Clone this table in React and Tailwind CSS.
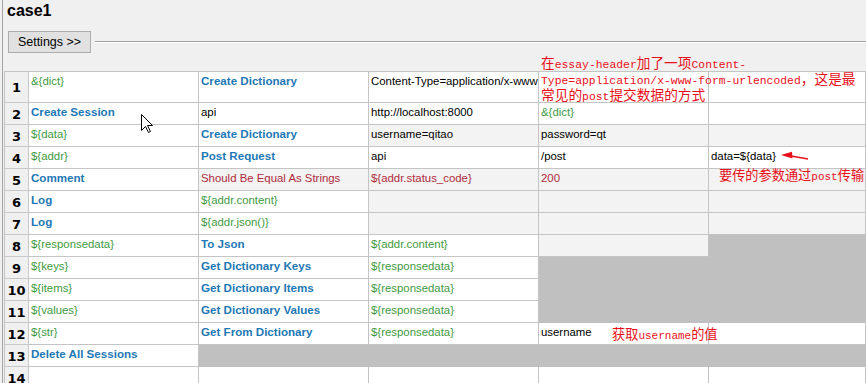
import React from "react";

const tone = {
  k: "font-bold text-[11.6px] text-[#1e78b4]",
  v: "text-[11.4px] text-[#3f9a3f]",
  t: "text-[11.4px] text-black",
  c: "text-[11.4px] text-[#b02a3c]",
};

const fill = {
  w: "bg-white border-[#c4c4c4]",
  l: "bg-[#f3f3f3] border-[#c4c4c4]",
  d: "bg-[#c0c0c0] border-[#c0c0c0]",
};

// [text, kind, background]
const rows = [
  [["&{dict}", "v", "w"], ["Create Dictionary", "k", "w"], ["Content-Type=application/x-www-form-urlencoded", "t", "w"], ["", "t", "w"], ["", "t", "w"]],
  [["Create Session", "k", "w"], ["api", "t", "w"], ["http://localhost:8000", "t", "w"], ["&{dict}", "v", "w"], ["", "t", "w"]],
  [["${data}", "v", "w"], ["Create Dictionary", "k", "w"], ["username=qitao", "t", "l"], ["password=qt", "t", "l"], ["", "t", "l"]],
  [["${addr}", "v", "w"], ["Post Request", "k", "w"], ["api", "t", "w"], ["/post", "t", "w"], ["data=${data}", "t", "w"]],
  [["Comment", "k", "w"], ["Should Be Equal As Strings", "c", "l"], ["${addr.status_code}", "c", "l"], ["200", "c", "l"], ["", "t", "l"]],
  [["Log", "k", "w"], ["${addr.content}", "v", "w"], ["", "t", "l"], ["", "t", "l"], ["", "t", "l"]],
  [["Log", "k", "w"], ["${addr.json()}", "v", "w"], ["", "t", "l"], ["", "t", "l"], ["", "t", "l"]],
  [["${responsedata}", "v", "w"], ["To Json", "k", "w"], ["${addr.content}", "v", "w"], ["", "t", "l"], ["", "t", "d"]],
  [["${keys}", "v", "w"], ["Get Dictionary Keys", "k", "w"], ["${responsedata}", "v", "w"], ["", "t", "d"], ["", "t", "d"]],
  [["${items}", "v", "w"], ["Get Dictionary Items", "k", "w"], ["${responsedata}", "v", "w"], ["", "t", "d"], ["", "t", "d"]],
  [["${values}", "v", "w"], ["Get Dictionary Values", "k", "w"], ["${responsedata}", "v", "w"], ["", "t", "d"], ["", "t", "d"]],
  [["${str}", "v", "w"], ["Get From Dictionary", "k", "w"], ["${responsedata}", "v", "w"], ["username", "t", "w"], ["", "t", "w"]],
  [["Delete All Sessions", "k", "w"], ["", "t", "d"], ["", "t", "d"], ["", "t", "d"], ["", "t", "d"]],
  [["", "t", "w"], ["", "t", "w"], ["", "t", "w"], ["", "t", "w"], ["", "t", "w"]],
];

// red notes pasted over the grid: CJK in a sans CJK face, latin in a mono face
function Note({ lines, big }) {
  return (
    <div className="leading-[13px] text-[#e8101a]">
      {lines.map((line, i) => (
        <div key={i} className="whitespace-nowrap">
          {line.split(/([\u3000-\u9fff\uff00-\uffef]+)/).map((part, j) =>
            /[\u3000-\u9fff\uff00-\uffef]/.test(part) ? (
              <span
                key={j}
                className={`[font-family:'Noto_Sans_CJK_SC',sans-serif] ${big ? "text-[13.7px]" : "text-[13.2px]"}`}
              >
                {part}
              </span>
            ) : (
              <span
                key={j}
                className={`[font-family:'Liberation_Mono',monospace] ${big ? "text-[11.4px]" : "text-[11px]"}`}
              >
                {part}
              </span>
            )
          )}
        </div>
      ))}
    </div>
  );
}

export default function App() {
  return (
    <div className="relative flex h-[383px] w-full overflow-hidden bg-[#f0f0f0] [font-family:'Liberation_Sans',Arial,sans-serif]">
      <div className="w-[2px] shrink-0" />
      <div className="w-[1px] shrink-0 bg-[#a4a4a4]" />
      <div className="flex min-w-0 flex-1 flex-col">
        {/* title */}
        <div className="h-[31px] shrink-0 pl-[4px] pt-[1px] text-[16px] font-bold leading-[20px] text-black">case1</div>

        {/* settings bar */}
        <div className="flex h-[22px] shrink-0 items-center">
          <button className="ml-[5px] h-[22px] w-[83px] shrink-0 border border-[#adadad] bg-[#e1e1e1] text-[12.5px] text-black">
            Settings &gt;&gt;
          </button>
          <div className="ml-[4px] h-[2px] flex-1 border-t border-b border-t-[#a0a0a0] border-b-white" />
        </div>

        {/* grid */}
        <div className="ml-[1px] mt-[18px] grid shrink-0 grid-cols-[24px_170px_170px_170px_170px_1fr] grid-rows-[31px] auto-rows-[22px] border-t border-l border-[#c4c4c4]">
          {rows.map((row, r) => (
            <React.Fragment key={r}>
              <div className="flex items-center justify-center border-r border-b border-[#c8c8c8] bg-[#f0f0f0] pt-[2px] text-[13px] font-bold text-black [font-family:'DejaVu_Sans',sans-serif]">
                {r + 1}
              </div>
              {row.map(([text, kind, bg], c) => (
                <div
                  key={c}
                  className={`overflow-hidden whitespace-nowrap border-r border-b pl-[2px] pt-[2px] leading-[14px] ${fill[bg]} ${tone[kind]}`}
                >
                  {text}
                </div>
              ))}
            </React.Fragment>
          ))}
        </div>
      </div>

      {/* annotations */}
      <div className="absolute left-[541px] top-[56px]">
        <Note
          big
          lines={[
            "在essay-header加了一项Content-",
            "Type=application/x-www-form-urlencoded，这是最",
            "常见的post提交数据的方式",
          ]}
        />
      </div>
      <div className="absolute left-[719px] top-[168px]">
        <Note lines={["要传的参数通过post传输"]} />
      </div>
      <div className="absolute left-[612px] top-[327px]">
        <Note lines={["获取username的值"]} />
      </div>

      {/* red arrow */}
      <svg className="absolute left-[778px] top-[148px]" width="34" height="14" viewBox="0 0 34 14">
        <path d="M13 8 L30 11" stroke="#e8101a" strokeWidth="1.5" fill="none" />
        <path d="M3 7 L14 3.8 L14.5 10.5 Z" fill="#e8101a" />
      </svg>

      {/* mouse pointer */}
      <svg className="absolute left-[141px] top-[114px]" width="13" height="20" viewBox="0 0 13 20">
        <path
          d="M0.5 0.5 L0.5 16.5 L4.5 12.5 L7.5 18.5 L9.5 17.5 L6.5 11.5 L11.5 11.5 Z"
          fill="#ffffff"
          stroke="#000000"
          strokeWidth="1"
          strokeLinejoin="miter"
        />
      </svg>
    </div>
  );
}
